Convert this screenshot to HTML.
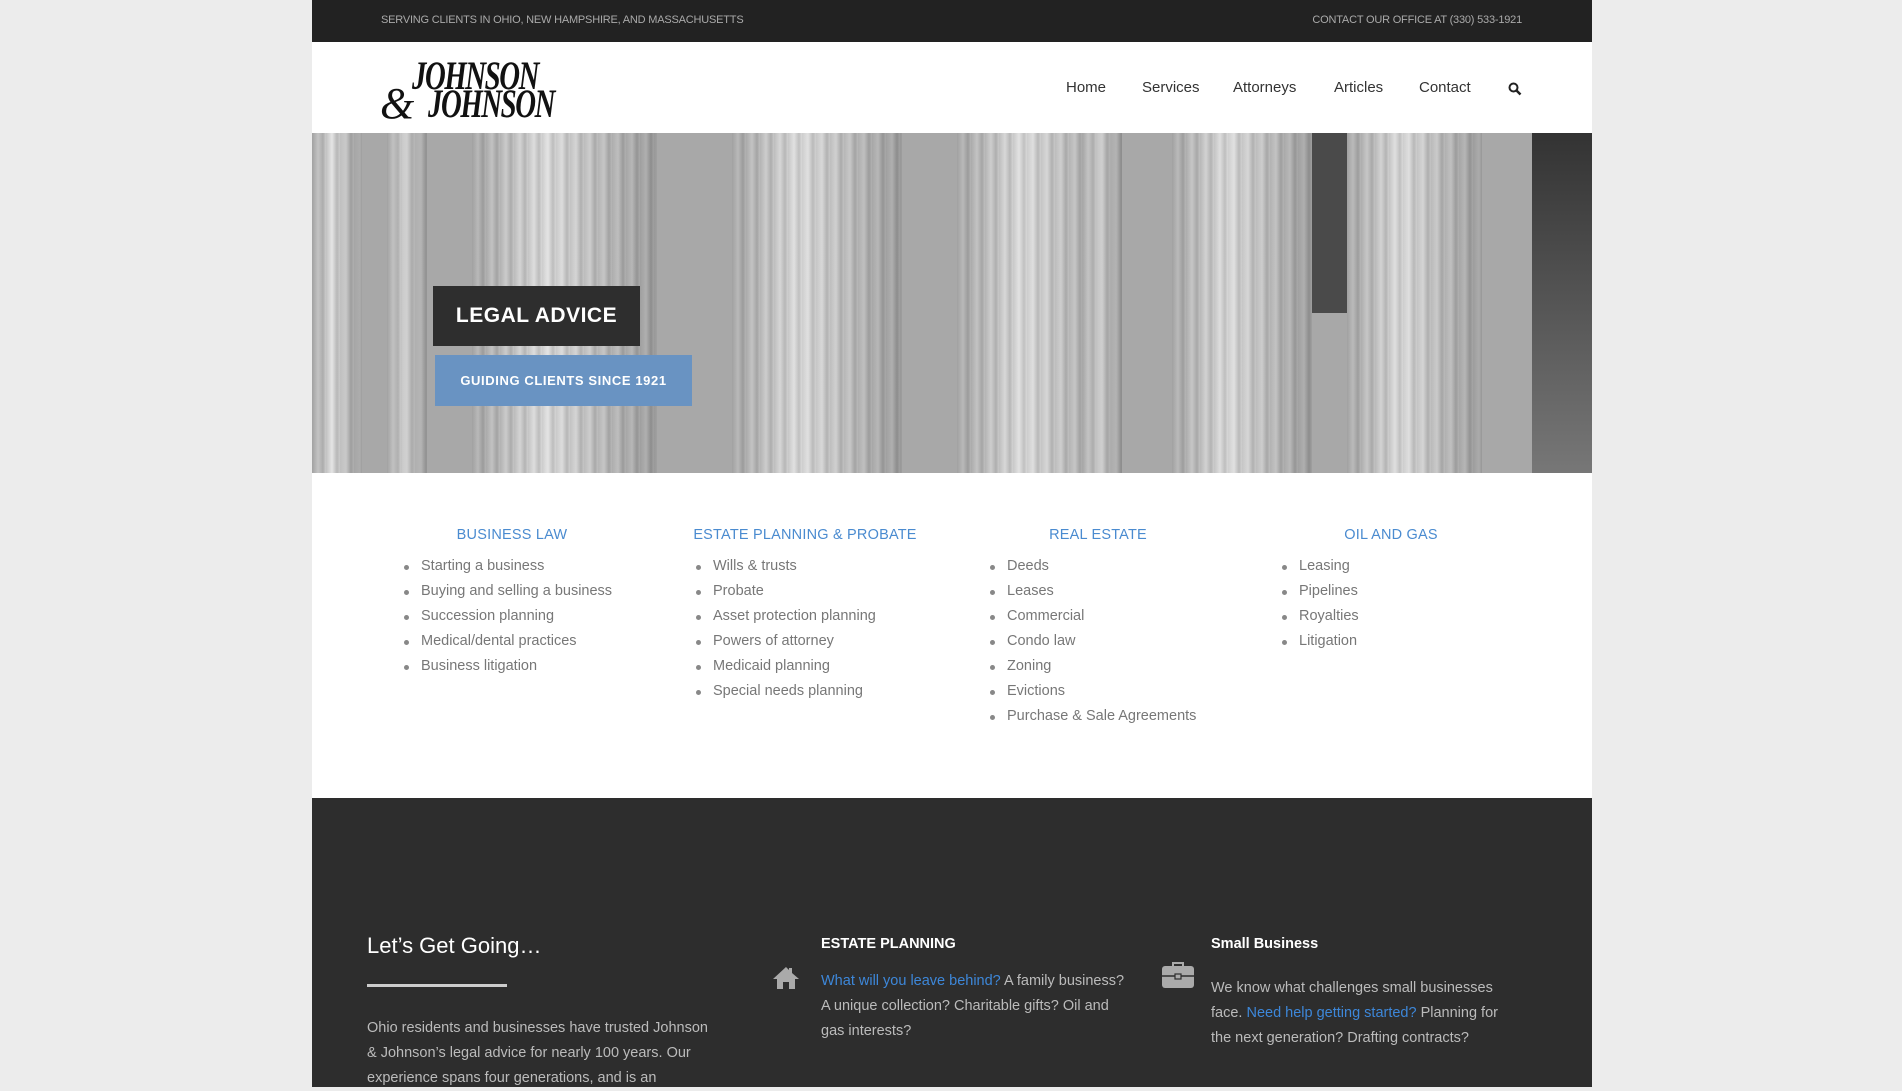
<!DOCTYPE html>
<html><head><meta charset="utf-8"><style>
*{margin:0;padding:0;box-sizing:border-box}
body{width:1902px;height:1087px;overflow:hidden;background:#ececec;font-family:"Liberation Sans",sans-serif}
.wrap{position:absolute;left:312px;top:0;width:1280px;height:1087px;background:#fff}
.top{position:absolute;left:0;top:0;width:1280px;height:42px;background:#222;color:#aaa;font-size:11px;letter-spacing:-0.2px}
.top span{position:absolute;top:14px}
.hdr{position:absolute;top:42px;left:0;width:1280px;height:91px;background:#fff}
.nav{position:absolute;top:37px;font-size:15px;color:#333}
.logo{position:absolute;font-family:"Liberation Serif",serif;font-style:italic;font-weight:bold;color:#111;transform-origin:left top}
.hero{position:absolute;top:133px;left:0;width:1280px;height:340px;overflow:hidden;background-color:#a8a8a8}
.col{position:absolute;top:0;height:340px;background:repeating-linear-gradient(90deg,#c9c9c9 0,#e2e2e2 6px,#b9b9b9 11px,#d6d6d6 14px)}
.col:after{content:"";position:absolute;inset:0;background:linear-gradient(90deg,rgba(0,0,0,.2),rgba(255,255,255,.1) 40%,rgba(0,0,0,.25))}
.la{position:absolute;left:121px;top:153px;width:207px;height:60px;background:#2e2e2e;color:#fff;font-weight:bold;font-size:21px;letter-spacing:.5px;text-align:center;line-height:60px}
.gc{position:absolute;left:123px;top:222px;width:257px;height:51px;background:#6993c2;color:#fff;font-weight:bold;font-size:13px;letter-spacing:.6px;text-align:center;line-height:51px}
.h{position:absolute;top:527px;color:#4a8bd0;font-size:14.5px;letter-spacing:.2px;text-align:center;width:280px}
ul{position:absolute;top:554px;list-style:none;font-size:14.5px;color:#777;line-height:25px}
ul li:before{content:"";position:absolute;margin-left:-17px;margin-top:11px;width:5px;height:5px;border-radius:50%;background:#888}
.dark{position:absolute;top:798px;left:0;width:1280px;height:289px;background:#2d2d2d;color:#ccc}
.dark p{position:absolute;font-size:14.5px;line-height:25px;color:#bbb}
a{color:#3d87d9;text-decoration:none}
</style></head><body>
<div class="wrap">
<div class="top"><span style="left:69px">SERVING CLIENTS IN OHIO, NEW HAMPSHIRE, AND MASSACHUSETTS</span><span style="right:70px">CONTACT OUR OFFICE AT (330) 533-1921</span></div>
<div class="hdr">
<div class="logo" style="left:100px;top:14px;font-size:40px;line-height:40px;letter-spacing:-2px;transform:scaleX(.72)">JOHNSON</div>
<div class="logo" style="left:116px;top:42px;font-size:40px;line-height:40px;letter-spacing:-2px;transform:scaleX(.72)">JOHNSON</div>
<div class="logo" style="left:68px;top:40px;font-size:44px;line-height:44px;font-weight:normal">&amp;</div>
<span class="nav" style="left:754px">Home</span>
<span class="nav" style="left:830px">Services</span>
<span class="nav" style="left:921px">Attorneys</span>
<span class="nav" style="left:1022px">Articles</span>
<span class="nav" style="left:1107px">Contact</span>
<svg style="position:absolute;left:1196px;top:40px" width="14" height="14" viewBox="0 0 14 14"><circle cx="5.5" cy="5.5" r="4" fill="none" stroke="#222" stroke-width="2"/><path d="M8.5 8.5L12.5 12.5" stroke="#222" stroke-width="2.5"/></svg>
</div>
<div class="hero">
<div class="col" style="left:0;width:50px"></div>
<div class="col" style="left:75px;width:40px;opacity:.8"></div>
<div class="col" style="left:160px;width:185px"></div>
<div class="col" style="left:420px;width:170px"></div>
<div class="col" style="left:645px;width:165px"></div>
<div style="position:absolute;left:960px;top:0;width:80px;height:180px;background:#4a4a4a"></div>
<div class="col" style="left:770px;width:40px;opacity:.7"></div>
<div class="col" style="left:860px;width:140px"></div>
<div class="col" style="left:1035px;width:135px"></div>
<div style="position:absolute;left:1220px;top:0;width:60px;height:340px;background:linear-gradient(#333,#777)"></div>
<div class="la">LEGAL ADVICE</div>
<div class="gc">GUIDING CLIENTS SINCE 1921</div>
</div>
<div class="h" style="left:60px">BUSINESS LAW</div>
<div class="h" style="left:353px">ESTATE PLANNING &amp; PROBATE</div>
<div class="h" style="left:646px">REAL ESTATE</div>
<div class="h" style="left:939px">OIL AND GAS</div>
<ul style="left:109px"><li>Starting a business</li><li>Buying and selling a business</li><li>Succession planning</li><li>Medical/dental practices</li><li>Business litigation</li></ul>
<ul style="left:401px"><li>Wills &amp; trusts</li><li>Probate</li><li>Asset protection planning</li><li>Powers of attorney</li><li>Medicaid planning</li><li>Special needs planning</li></ul>
<ul style="left:695px"><li>Deeds</li><li>Leases</li><li>Commercial</li><li>Condo law</li><li>Zoning</li><li>Evictions</li><li>Purchase &amp; Sale Agreements</li></ul>
<ul style="left:987px"><li>Leasing</li><li>Pipelines</li><li>Royalties</li><li>Litigation</li></ul>
<div class="dark">
<div style="position:absolute;left:55px;top:135px;font-size:22px;color:#fff">Let’s Get Going…</div>
<div style="position:absolute;left:55px;top:186px;width:140px;height:3px;background:#ccc"></div>
<p style="left:55px;top:218px;width:350px">Ohio residents and businesses have trusted Johnson &amp; Johnson’s legal advice for nearly 100 years. Our experience spans four generations, and is an</p>
<div style="position:absolute;left:509px;top:138px;font-size:14.5px;font-weight:bold;color:#fff">ESTATE PLANNING</div>
<svg style="position:absolute;left:460px;top:168px" width="28" height="24" viewBox="0 0 28 24"><path d="M14 1L1 13h4v10h6v-7h6v7h6V13h4L20 7V2h-3v2z" fill="#aaa"/></svg>
<p style="left:509px;top:171px;width:315px"><a>What will you leave behind?</a> A family business? A unique collection? Charitable gifts? Oil and gas interests?</p>
<div style="position:absolute;left:899px;top:138px;font-size:14.5px;font-weight:bold;color:#fff">Small Business</div>
<svg style="position:absolute;left:849px;top:163px" width="34" height="28" viewBox="0 0 34 28"><path d="M12 5V2h10v3" fill="none" stroke="#aaa" stroke-width="2"/><rect x="1" y="5" width="32" height="22" rx="3" fill="#aaa"/><path d="M1 15h32" stroke="#2d2d2d" stroke-width="1.5"/><rect x="14" y="13" width="6" height="5" fill="#aaa" stroke="#2d2d2d" stroke-width="1.2"/></svg>
<p style="left:899px;top:178px;width:310px">We know what challenges small businesses face. <a>Need help getting started?</a> Planning for the next generation? Drafting contracts?</p>
</div>
</div>
</body></html>
